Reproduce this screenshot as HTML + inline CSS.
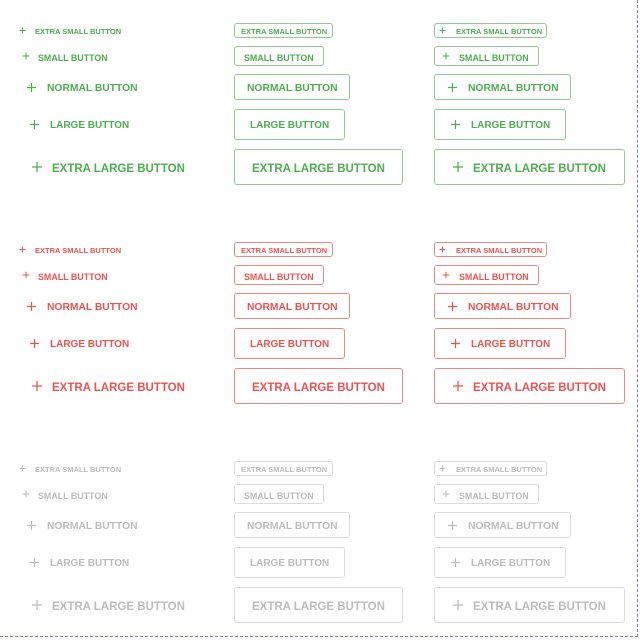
<!DOCTYPE html>
<html><head><meta charset="utf-8"><style>
html,body{margin:0;padding:0;background:#fff;}
body{width:640px;height:640px;position:relative;overflow:hidden;font-family:"Liberation Sans",Arial,sans-serif;font-weight:bold;}
.g{position:absolute;left:0;width:640px;height:200px;}
.green{top:0;color:#4caf50;}
.red{top:219px;color:#ef5350;}
.grey{top:438px;color:#bdbdbd;}
.green .b{border-color:#8fcb92}.red .b{border-color:#ec8a88}.grey .b{border-color:#dcdcdc}
.b{position:absolute;border:1px solid;border-radius:3px;box-sizing:border-box;}
.t{position:absolute;height:20px;line-height:20px;white-space:nowrap;margin-top:1.5px;}
.p{position:absolute;transform:scale(0.85);}
.p svg{display:block;width:100%;height:100%;}
.frame{position:absolute;left:-5px;top:-5px;width:643px;height:642px;box-sizing:border-box;border:1.5px dashed #8577cc;}
</style></head><body>
<div class="frame"></div>

<div class="g green">
<span class="p" style="left:19px;top:27px;width:7px;height:7px"><svg viewBox="0 0 10 10"><path d="M5 0V10M0 5H10" stroke="currentColor" stroke-width="1.6"/></svg></span>
<span class="t" style="left:35px;top:20px;font-size:7.5px">EXTRA SMALL BUTTON</span>
<div class="b" style="left:234px;top:23px;width:99px;height:15px"></div>
<span class="t" style="left:241px;top:20px;font-size:7.5px">EXTRA SMALL BUTTON</span>
<div class="b" style="left:434px;top:23px;width:113px;height:15px"></div>
<span class="p" style="left:439px;top:27px;width:7px;height:7px"><svg viewBox="0 0 10 10"><path d="M5 0V10M0 5H10" stroke="currentColor" stroke-width="1.6"/></svg></span>
<span class="t" style="left:456px;top:20px;font-size:7.5px">EXTRA SMALL BUTTON</span>
<span class="p" style="left:22px;top:52px;width:8px;height:8px"><svg viewBox="0 0 10 10"><path d="M5 0V10M0 5H10" stroke="currentColor" stroke-width="1.5"/></svg></span>
<span class="t" style="left:38px;top:46px;font-size:8.9px">SMALL BUTTON</span>
<div class="b" style="left:234px;top:46px;width:90px;height:20px"></div>
<span class="t" style="left:244px;top:46px;font-size:8.9px">SMALL BUTTON</span>
<div class="b" style="left:434px;top:46px;width:105px;height:20px"></div>
<span class="p" style="left:442px;top:52px;width:8px;height:8px"><svg viewBox="0 0 10 10"><path d="M5 0V10M0 5H10" stroke="currentColor" stroke-width="1.5"/></svg></span>
<span class="t" style="left:459px;top:46px;font-size:8.9px">SMALL BUTTON</span>
<span class="p" style="left:26px;top:82px;width:11px;height:11px"><svg viewBox="0 0 10 10"><path d="M5 0V10M0 5H10" stroke="currentColor" stroke-width="1.3"/></svg></span>
<span class="t" style="left:47px;top:77px;font-size:10.3px">NORMAL BUTTON</span>
<div class="b" style="left:234px;top:74px;width:116px;height:26px"></div>
<span class="t" style="left:247px;top:77px;font-size:10.3px">NORMAL BUTTON</span>
<div class="b" style="left:434px;top:74px;width:137px;height:26px"></div>
<span class="p" style="left:447px;top:82px;width:11px;height:11px"><svg viewBox="0 0 10 10"><path d="M5 0V10M0 5H10" stroke="currentColor" stroke-width="1.3"/></svg></span>
<span class="t" style="left:468px;top:77px;font-size:10.3px">NORMAL BUTTON</span>
<span class="p" style="left:29px;top:119px;width:11px;height:11px"><svg viewBox="0 0 10 10"><path d="M5 0V10M0 5H10" stroke="currentColor" stroke-width="1.3"/></svg></span>
<span class="t" style="left:50px;top:114px;font-size:10px">LARGE BUTTON</span>
<div class="b" style="left:234px;top:109px;width:111px;height:31px"></div>
<span class="t" style="left:250px;top:114px;font-size:10px">LARGE BUTTON</span>
<div class="b" style="left:434px;top:109px;width:132px;height:31px"></div>
<span class="p" style="left:450px;top:119px;width:11px;height:11px"><svg viewBox="0 0 10 10"><path d="M5 0V10M0 5H10" stroke="currentColor" stroke-width="1.3"/></svg></span>
<span class="t" style="left:471px;top:114px;font-size:10px">LARGE BUTTON</span>
<span class="p" style="left:31px;top:161px;width:12px;height:12px"><svg viewBox="0 0 10 10"><path d="M5 0V10M0 5H10" stroke="currentColor" stroke-width="1.25"/></svg></span>
<span class="t" style="left:52px;top:157px;font-size:11.5px">EXTRA LARGE BUTTON</span>
<div class="b" style="left:234px;top:149px;width:169px;height:36px"></div>
<span class="t" style="left:252px;top:157px;font-size:11.5px">EXTRA LARGE BUTTON</span>
<div class="b" style="left:434px;top:149px;width:191px;height:36px"></div>
<span class="p" style="left:452px;top:161px;width:12px;height:12px"><svg viewBox="0 0 10 10"><path d="M5 0V10M0 5H10" stroke="currentColor" stroke-width="1.25"/></svg></span>
<span class="t" style="left:473px;top:157px;font-size:11.5px">EXTRA LARGE BUTTON</span>
</div>

<div class="g red">
<span class="p" style="left:19px;top:27px;width:7px;height:7px"><svg viewBox="0 0 10 10"><path d="M5 0V10M0 5H10" stroke="currentColor" stroke-width="1.6"/></svg></span>
<span class="t" style="left:35px;top:20px;font-size:7.5px">EXTRA SMALL BUTTON</span>
<div class="b" style="left:234px;top:23px;width:99px;height:15px"></div>
<span class="t" style="left:241px;top:20px;font-size:7.5px">EXTRA SMALL BUTTON</span>
<div class="b" style="left:434px;top:23px;width:113px;height:15px"></div>
<span class="p" style="left:439px;top:27px;width:7px;height:7px"><svg viewBox="0 0 10 10"><path d="M5 0V10M0 5H10" stroke="currentColor" stroke-width="1.6"/></svg></span>
<span class="t" style="left:456px;top:20px;font-size:7.5px">EXTRA SMALL BUTTON</span>
<span class="p" style="left:22px;top:52px;width:8px;height:8px"><svg viewBox="0 0 10 10"><path d="M5 0V10M0 5H10" stroke="currentColor" stroke-width="1.5"/></svg></span>
<span class="t" style="left:38px;top:46px;font-size:8.9px">SMALL BUTTON</span>
<div class="b" style="left:234px;top:46px;width:90px;height:20px"></div>
<span class="t" style="left:244px;top:46px;font-size:8.9px">SMALL BUTTON</span>
<div class="b" style="left:434px;top:46px;width:105px;height:20px"></div>
<span class="p" style="left:442px;top:52px;width:8px;height:8px"><svg viewBox="0 0 10 10"><path d="M5 0V10M0 5H10" stroke="currentColor" stroke-width="1.5"/></svg></span>
<span class="t" style="left:459px;top:46px;font-size:8.9px">SMALL BUTTON</span>
<span class="p" style="left:26px;top:82px;width:11px;height:11px"><svg viewBox="0 0 10 10"><path d="M5 0V10M0 5H10" stroke="currentColor" stroke-width="1.3"/></svg></span>
<span class="t" style="left:47px;top:77px;font-size:10.3px">NORMAL BUTTON</span>
<div class="b" style="left:234px;top:74px;width:116px;height:26px"></div>
<span class="t" style="left:247px;top:77px;font-size:10.3px">NORMAL BUTTON</span>
<div class="b" style="left:434px;top:74px;width:137px;height:26px"></div>
<span class="p" style="left:447px;top:82px;width:11px;height:11px"><svg viewBox="0 0 10 10"><path d="M5 0V10M0 5H10" stroke="currentColor" stroke-width="1.3"/></svg></span>
<span class="t" style="left:468px;top:77px;font-size:10.3px">NORMAL BUTTON</span>
<span class="p" style="left:29px;top:119px;width:11px;height:11px"><svg viewBox="0 0 10 10"><path d="M5 0V10M0 5H10" stroke="currentColor" stroke-width="1.3"/></svg></span>
<span class="t" style="left:50px;top:114px;font-size:10px">LARGE BUTTON</span>
<div class="b" style="left:234px;top:109px;width:111px;height:31px"></div>
<span class="t" style="left:250px;top:114px;font-size:10px">LARGE BUTTON</span>
<div class="b" style="left:434px;top:109px;width:132px;height:31px"></div>
<span class="p" style="left:450px;top:119px;width:11px;height:11px"><svg viewBox="0 0 10 10"><path d="M5 0V10M0 5H10" stroke="currentColor" stroke-width="1.3"/></svg></span>
<span class="t" style="left:471px;top:114px;font-size:10px">LARGE BUTTON</span>
<span class="p" style="left:31px;top:161px;width:12px;height:12px"><svg viewBox="0 0 10 10"><path d="M5 0V10M0 5H10" stroke="currentColor" stroke-width="1.25"/></svg></span>
<span class="t" style="left:52px;top:157px;font-size:11.5px">EXTRA LARGE BUTTON</span>
<div class="b" style="left:234px;top:149px;width:169px;height:36px"></div>
<span class="t" style="left:252px;top:157px;font-size:11.5px">EXTRA LARGE BUTTON</span>
<div class="b" style="left:434px;top:149px;width:191px;height:36px"></div>
<span class="p" style="left:452px;top:161px;width:12px;height:12px"><svg viewBox="0 0 10 10"><path d="M5 0V10M0 5H10" stroke="currentColor" stroke-width="1.25"/></svg></span>
<span class="t" style="left:473px;top:157px;font-size:11.5px">EXTRA LARGE BUTTON</span>
</div>

<div class="g grey">
<span class="p" style="left:19px;top:27px;width:7px;height:7px"><svg viewBox="0 0 10 10"><path d="M5 0V10M0 5H10" stroke="currentColor" stroke-width="1.6"/></svg></span>
<span class="t" style="left:35px;top:20px;font-size:7.5px">EXTRA SMALL BUTTON</span>
<div class="b" style="left:234px;top:23px;width:99px;height:15px"></div>
<span class="t" style="left:241px;top:20px;font-size:7.5px">EXTRA SMALL BUTTON</span>
<div class="b" style="left:434px;top:23px;width:113px;height:15px"></div>
<span class="p" style="left:439px;top:27px;width:7px;height:7px"><svg viewBox="0 0 10 10"><path d="M5 0V10M0 5H10" stroke="currentColor" stroke-width="1.6"/></svg></span>
<span class="t" style="left:456px;top:20px;font-size:7.5px">EXTRA SMALL BUTTON</span>
<span class="p" style="left:22px;top:52px;width:8px;height:8px"><svg viewBox="0 0 10 10"><path d="M5 0V10M0 5H10" stroke="currentColor" stroke-width="1.5"/></svg></span>
<span class="t" style="left:38px;top:46px;font-size:8.9px">SMALL BUTTON</span>
<div class="b" style="left:234px;top:46px;width:90px;height:20px"></div>
<span class="t" style="left:244px;top:46px;font-size:8.9px">SMALL BUTTON</span>
<div class="b" style="left:434px;top:46px;width:105px;height:20px"></div>
<span class="p" style="left:442px;top:52px;width:8px;height:8px"><svg viewBox="0 0 10 10"><path d="M5 0V10M0 5H10" stroke="currentColor" stroke-width="1.5"/></svg></span>
<span class="t" style="left:459px;top:46px;font-size:8.9px">SMALL BUTTON</span>
<span class="p" style="left:26px;top:82px;width:11px;height:11px"><svg viewBox="0 0 10 10"><path d="M5 0V10M0 5H10" stroke="currentColor" stroke-width="1.3"/></svg></span>
<span class="t" style="left:47px;top:77px;font-size:10.3px">NORMAL BUTTON</span>
<div class="b" style="left:234px;top:74px;width:116px;height:26px"></div>
<span class="t" style="left:247px;top:77px;font-size:10.3px">NORMAL BUTTON</span>
<div class="b" style="left:434px;top:74px;width:137px;height:26px"></div>
<span class="p" style="left:447px;top:82px;width:11px;height:11px"><svg viewBox="0 0 10 10"><path d="M5 0V10M0 5H10" stroke="currentColor" stroke-width="1.3"/></svg></span>
<span class="t" style="left:468px;top:77px;font-size:10.3px">NORMAL BUTTON</span>
<span class="p" style="left:29px;top:119px;width:11px;height:11px"><svg viewBox="0 0 10 10"><path d="M5 0V10M0 5H10" stroke="currentColor" stroke-width="1.3"/></svg></span>
<span class="t" style="left:50px;top:114px;font-size:10px">LARGE BUTTON</span>
<div class="b" style="left:234px;top:109px;width:111px;height:31px"></div>
<span class="t" style="left:250px;top:114px;font-size:10px">LARGE BUTTON</span>
<div class="b" style="left:434px;top:109px;width:132px;height:31px"></div>
<span class="p" style="left:450px;top:119px;width:11px;height:11px"><svg viewBox="0 0 10 10"><path d="M5 0V10M0 5H10" stroke="currentColor" stroke-width="1.3"/></svg></span>
<span class="t" style="left:471px;top:114px;font-size:10px">LARGE BUTTON</span>
<span class="p" style="left:31px;top:161px;width:12px;height:12px"><svg viewBox="0 0 10 10"><path d="M5 0V10M0 5H10" stroke="currentColor" stroke-width="1.25"/></svg></span>
<span class="t" style="left:52px;top:157px;font-size:11.5px">EXTRA LARGE BUTTON</span>
<div class="b" style="left:234px;top:149px;width:169px;height:36px"></div>
<span class="t" style="left:252px;top:157px;font-size:11.5px">EXTRA LARGE BUTTON</span>
<div class="b" style="left:434px;top:149px;width:191px;height:36px"></div>
<span class="p" style="left:452px;top:161px;width:12px;height:12px"><svg viewBox="0 0 10 10"><path d="M5 0V10M0 5H10" stroke="currentColor" stroke-width="1.25"/></svg></span>
<span class="t" style="left:473px;top:157px;font-size:11.5px">EXTRA LARGE BUTTON</span>
</div>
</body></html>
